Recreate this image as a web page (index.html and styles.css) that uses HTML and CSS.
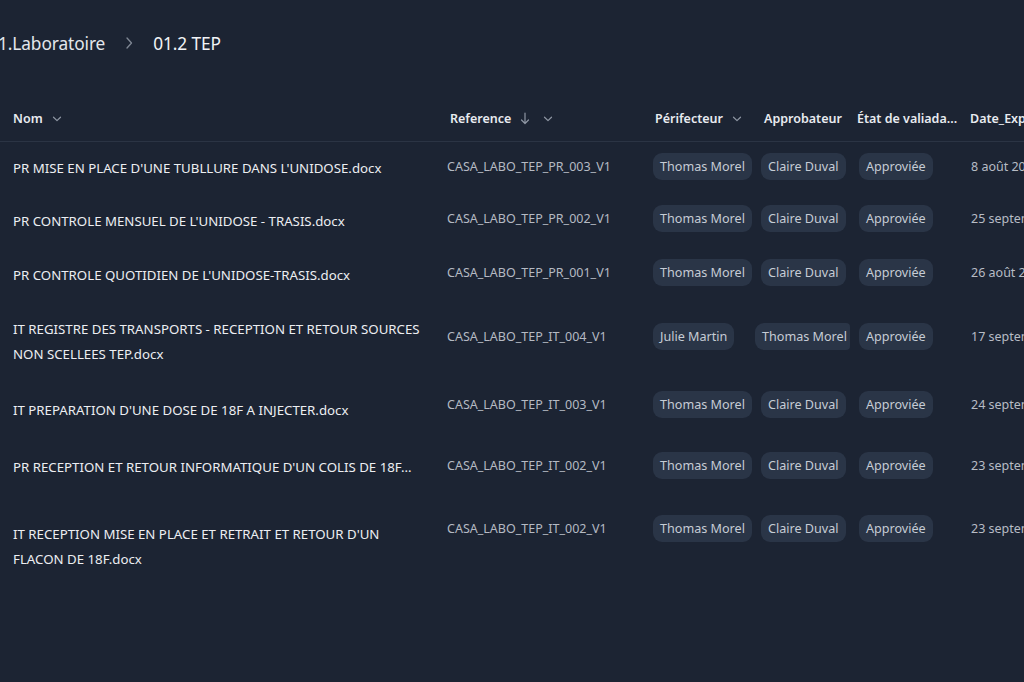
FILE: index.html
```html
<!DOCTYPE html>
<html lang="fr">
<head>
<meta charset="utf-8">
<title>01.2 TEP</title>
<link rel="stylesheet" href="styles.css">
</head>
<body>
<main class="page">
  <nav class="crumbs">
    <span class="crumb">1.Laboratoire</span>
    <svg class="crumb-sep" width="10" height="14" viewBox="0 0 10 14"><path d="M3 2 L7.5 7 L3 12" fill="none" stroke="#7f8794" stroke-width="1.3" stroke-linecap="round" stroke-linejoin="round"/></svg>
    <span class="crumb crumb--current">01.2 TEP</span>
  </nav>

  <section class="table">
    <div class="row row--head">
      <div class="th">Nom <svg class="chev" width="10" height="6" viewBox="0 0 10 6"><path d="M1.5 1.2 L5 4.6 L8.5 1.2" fill="none" stroke="#8e96a3" stroke-width="1.2" stroke-linecap="round" stroke-linejoin="round"/></svg></div>
      <div class="th th--ref">Reference <svg class="arrow" width="10" height="13" viewBox="0 0 10 13"><path d="M5 1 V11.5 M1.5 8 L5 11.5 L8.5 8" fill="none" stroke="#8e96a3" stroke-width="1.2" stroke-linecap="round" stroke-linejoin="round"/></svg><svg class="chev" width="10" height="6" viewBox="0 0 10 6"><path d="M1.5 1.2 L5 4.6 L8.5 1.2" fill="none" stroke="#8e96a3" stroke-width="1.2" stroke-linecap="round" stroke-linejoin="round"/></svg></div>
      <div class="th th--ver">Périfecteur <svg class="chev" width="10" height="6" viewBox="0 0 10 6"><path d="M1.5 1.2 L5 4.6 L8.5 1.2" fill="none" stroke="#8e96a3" stroke-width="1.2" stroke-linecap="round" stroke-linejoin="round"/></svg></div>
      <div class="th th--app">Approbateur</div>
      <div class="th th--etat">État de valiada...</div>
      <div class="th th--date">Date_Expiration</div>
    </div>

    <div class="row row--r1">
      <div class="name">PR MISE EN PLACE D'UNE TUBLLURE DANS L'UNIDOSE.docx</div>
      <div class="ref">CASA_LABO_TEP_PR_003_V1</div>
      <div class="cell"><span class="chip">Thomas Morel</span></div>
      <div class="cell"><span class="chip">Claire Duval</span></div>
      <div class="cell"><span class="chip">Approviée</span></div>
      <div class="date">8 août 2024</div>
    </div>

    <div class="row row--r2">
      <div class="name">PR CONTROLE MENSUEL DE L'UNIDOSE - TRASIS.docx</div>
      <div class="ref">CASA_LABO_TEP_PR_002_V1</div>
      <div class="cell"><span class="chip">Thomas Morel</span></div>
      <div class="cell"><span class="chip">Claire Duval</span></div>
      <div class="cell"><span class="chip">Approviée</span></div>
      <div class="date">25 septembre 2024</div>
    </div>

    <div class="row row--r3">
      <div class="name">PR CONTROLE QUOTIDIEN DE L'UNIDOSE-TRASIS.docx</div>
      <div class="ref">CASA_LABO_TEP_PR_001_V1</div>
      <div class="cell"><span class="chip">Thomas Morel</span></div>
      <div class="cell"><span class="chip">Claire Duval</span></div>
      <div class="cell"><span class="chip">Approviée</span></div>
      <div class="date">26 août 2024</div>
    </div>

    <div class="row row--r4">
      <div class="name">IT REGISTRE DES TRANSPORTS - RECEPTION ET RETOUR SOURCES NON SCELLEES TEP.docx</div>
      <div class="ref">CASA_LABO_TEP_IT_004_V1</div>
      <div class="cell"><span class="chip">Julie Martin</span></div>
      <div class="cell cell--shift"><span class="chip chip--tight">Thomas Morel</span></div>
      <div class="cell"><span class="chip">Approviée</span></div>
      <div class="date">17 septembre 2024</div>
    </div>

    <div class="row row--r5">
      <div class="name">IT PREPARATION D'UNE DOSE DE 18F A INJECTER.docx</div>
      <div class="ref">CASA_LABO_TEP_IT_003_V1</div>
      <div class="cell"><span class="chip">Thomas Morel</span></div>
      <div class="cell"><span class="chip">Claire Duval</span></div>
      <div class="cell"><span class="chip">Approviée</span></div>
      <div class="date">24 septembre 2024</div>
    </div>

    <div class="row row--r6">
      <div class="name name--single">PR RECEPTION ET RETOUR INFORMATIQUE D'UN COLIS DE 18F...</div>
      <div class="ref">CASA_LABO_TEP_IT_002_V1</div>
      <div class="cell"><span class="chip">Thomas Morel</span></div>
      <div class="cell"><span class="chip">Claire Duval</span></div>
      <div class="cell"><span class="chip">Approviée</span></div>
      <div class="date">23 septembre 2024</div>
    </div>

    <div class="row row--r7">
      <div class="name">IT RECEPTION MISE EN PLACE ET RETRAIT ET RETOUR D'UN FLACON DE 18F.docx</div>
      <div class="ref">CASA_LABO_TEP_IT_002_V1</div>
      <div class="cell"><span class="chip">Thomas Morel</span></div>
      <div class="cell"><span class="chip">Claire Duval</span></div>
      <div class="cell"><span class="chip">Approviée</span></div>
      <div class="date">23 septembre 2024</div>
    </div>
  </section>
</main>
</body>
</html>
```

FILE: styles.css
```css
html, body {
  margin: 0;
  padding: 0;
  overflow: hidden;
  background: #1c2433;
}
body {
  width: 1024px;
  height: 682px;
  font-family: "Noto Sans", "Open Sans", sans-serif;
  color: #e6e9ee;
}
.page {
  display: flex;
  flex-direction: column;
}
.crumbs {
  display: flex;
  align-items: center;
  height: 30px;
  margin-top: 28px;
  margin-left: -2px;
}
.crumb {
  font-size: 17.3px;
  color: #e3e7ec;
  letter-spacing: -0.1px;
}
.crumb-sep {
  margin: 0 19px 0 19px;
}
.crumb--current {
  color: #f1f3f6;
}

.table {
  margin-top: 38px;
  display: flex;
  flex-direction: column;
}
.row {
  display: grid;
  grid-template-columns: 434px 206px 108px 98px 112px 1fr;
  align-items: center;
  padding-left: 13px;
  white-space: nowrap;
}
.row--head {
  height: 45px;
  border-bottom: 1px solid #2b3444;
}
.th {
  display: flex;
  align-items: center;
  font-size: 12.5px;
  font-weight: 600;
  color: #e8ebf0;
}
.th .chev {
  margin-left: 9px;
  margin-top: 1px;
}
.th--ref { margin-left: 3px; }
.th--ref .arrow { margin-left: 9px; }
.th--ref .chev { margin-left: 13px; }
.th--ver { margin-left: 2px; }
.th--app { margin-left: 3px; }
.th--etat { margin-left: -2px; }
.th--date { margin-left: -1px; overflow: hidden; }

.name {
  font-size: 13.25px;
  line-height: 25px;
  color: #eceef2;
  white-space: normal;
  padding-right: 14px;
}
.name--single {
  white-space: nowrap;
}
.ref {
  font-size: 12.5px;
  color: #b5bac3;
}
.date {
  font-size: 12.5px;
  color: #b7bcc5;
  overflow: hidden;
}
.cell {
  display: flex;
}
.cell--shift {
  margin-left: -6px;
}
.chip {
  display: inline-flex;
  align-items: center;
  height: 27px;
  padding: 0 7px;
  border-radius: 9px;
  background: #2a3547;
  color: #c6ccd5;
  font-size: 12.6px;
}
.chip--tight {
  padding-right: 3px;
  border-radius: 9px 4px 4px 9px;
}

.row--r1 { height: 52px; }
.row--r2 { height: 54px; }
.row--r3 { height: 54px; }
.row--r4 { height: 80px; }
.row--r5 { height: 56px; }
.row--r6 { height: 58px; }
.row--r7 { height: 102px; }

.row--r1 .ref, .row--r1 .cell, .row--r1 .date { margin-bottom: 4px; }
.row--r2 .ref, .row--r2 .cell, .row--r2 .date { margin-bottom: 6px; }
.row--r3 .ref, .row--r3 .cell, .row--r3 .date { margin-bottom: 6px; }
.row--r4 .ref, .row--r4 .cell, .row--r4 .date { margin-bottom: 12px; }
.row--r5 .ref, .row--r5 .cell, .row--r5 .date { margin-bottom: 12px; }
.row--r6 .ref, .row--r6 .cell, .row--r6 .date { margin-bottom: 4px; }
.row--r7 .ref, .row--r7 .cell, .row--r7 .date { margin-bottom: 38px; }
```
